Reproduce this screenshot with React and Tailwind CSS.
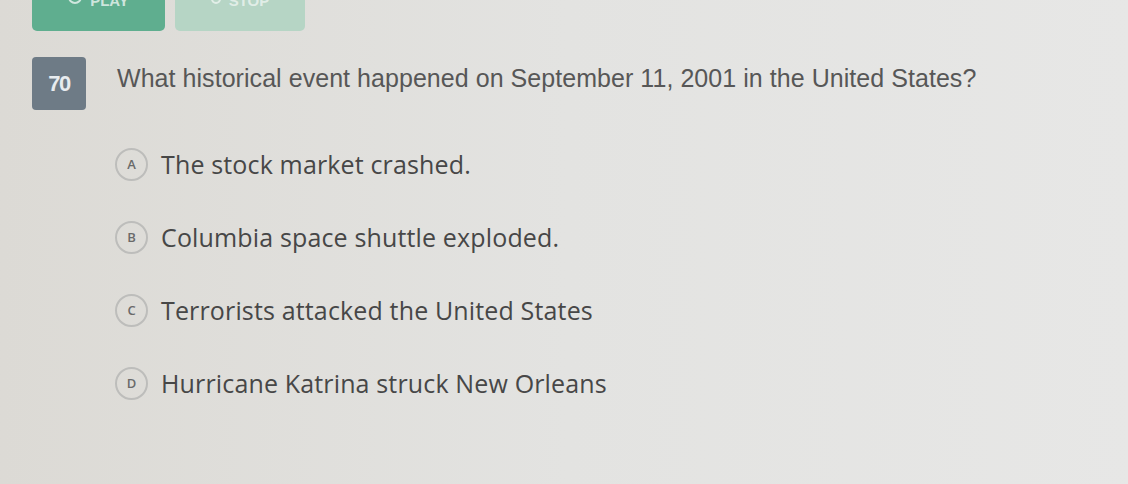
import React from "react";

const options = [
  { letter: "A", text: "The stock market crashed." },
  { letter: "B", text: "Columbia space shuttle exploded." },
  { letter: "C", text: "Terrorists attacked the United States" },
  { letter: "D", text: "Hurricane Katrina struck New Orleans" },
];

function App() {
  return (
    <div className="w-[1128px] h-[484px] overflow-hidden bg-gradient-to-r from-[#dcdad5] via-[#e3e3e1] to-[#e7e7e6]">
      {/* Top buttons (cut off) */}
      <div className="flex gap-[10px] pl-[32px] -mt-[14px]">
        <div className="w-[133px] h-[45px] rounded-[5px] bg-[#5fae8f] flex items-start justify-center pt-[4px] gap-2 text-white/70 text-[15px] font-bold font-['Liberation_Sans',sans-serif]">
          <span className="w-[14px] h-[14px] rounded-full border-2 border-white/70"></span>
          PLAY
        </div>
        <div className="w-[130px] h-[45px] rounded-[5px] bg-[#b6d5c5] flex items-start justify-center pt-[4px] gap-2 text-white/60 text-[15px] font-bold font-['Liberation_Sans',sans-serif]">
          <span className="w-[10px] h-[14px] rounded-full border-2 border-white/60"></span>
          STOP
        </div>
      </div>

      {/* Question */}
      <div className="flex items-start mt-[26px] pl-[32px]">
        <div className="w-[54px] h-[53px] rounded-[4px] bg-[#6e7b86] flex items-center justify-center text-[#e8ecef] text-[22px] font-bold font-['Liberation_Sans',sans-serif] tracking-[-1.5px]">
          70
        </div>
        <p className="ml-[31px] mt-[4px] text-[25px] leading-[34px] text-[#575757] font-['Liberation_Sans',sans-serif] tracking-[0.05px]">
          What historical event happened on September 11, 2001 in the United States?
        </p>
      </div>

      {/* Options */}
      <div className="flex flex-col gap-[40px] pl-[115px] mt-[38px]">
        {options.map((o) => (
          <div key={o.letter} className="flex items-center h-[33px]">
            <span className="w-[33px] h-[33px] rounded-full border-2 border-[#bdbdbb] flex items-center justify-center text-[13px] font-semibold text-[#6a6a6a] font-['Open_Sans',sans-serif]">
              {o.letter}
            </span>
            <span className="ml-[13px] text-[25px] text-[#474747] font-['Open_Sans',sans-serif] tracking-[0.15px]">
              {o.text}
            </span>
          </div>
        ))}
      </div>
    </div>
  );
}

export default App;
